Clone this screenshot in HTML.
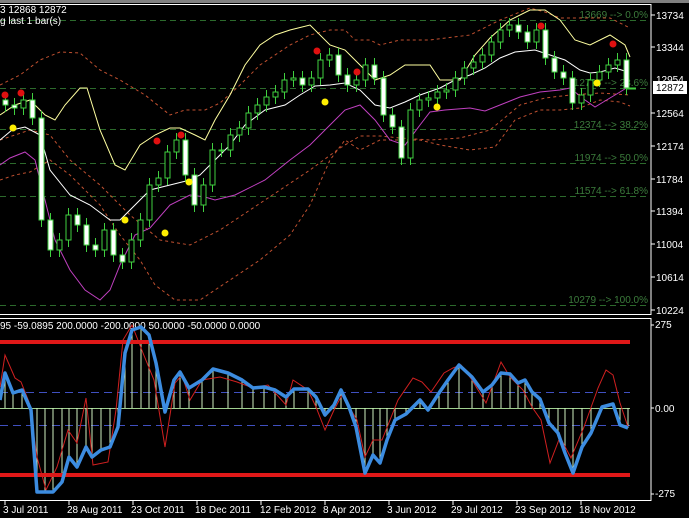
<!DOCTYPE html>
<html><head><meta charset="utf-8"><style>
html,body{margin:0;padding:0;background:#000;width:689px;height:518px;overflow:hidden}
svg{display:block}
text{font-family:"Liberation Sans",sans-serif;font-size:10px}
</style></head><body>
<svg width="689" height="518" viewBox="0 0 689 518" xmlns="http://www.w3.org/2000/svg">
<rect x="0" y="0" width="689" height="518" fill="#000"/>
<rect x="0" y="0" width="689" height="3" fill="#808080"/>
<!-- frames -->
<rect x="-1" y="4.5" width="652" height="310" fill="none" stroke="#fff" stroke-width="1"/>
<rect x="-1" y="318.5" width="652" height="182" fill="none" stroke="#fff" stroke-width="1"/>
<!-- fib lines -->
<g stroke="#2c6a2c" stroke-dasharray="6,4" stroke-width="1">
<line x1="0" y1="20.5" x2="650" y2="20.5"/>
<line x1="0" y1="88.5" x2="650" y2="88.5"/>
<line x1="0" y1="129.5" x2="650" y2="129.5"/>
<line x1="0" y1="163.5" x2="650" y2="163.5"/>
<line x1="0" y1="196.5" x2="650" y2="196.5"/>
<line x1="0" y1="305.5" x2="650" y2="305.5"/>
</g>
<g fill="#3c7c3c" text-anchor="end">
<text x="648" y="18">13669 --&gt; 0.0%</text>
<text x="648" y="86">12768 --&gt; 23.6%</text>
<text x="648" y="128">12374 --&gt; 38.2%</text>
<text x="648" y="161">11974 --&gt; 50.0%</text>
<text x="648" y="194">11574 --&gt; 61.8%</text>
<text x="648" y="303">10279 --&gt; 100.0%</text>
</g>
<!-- envelopes -->
<g fill="none" stroke-width="1">
<polyline stroke="#c05030" stroke-dasharray="3,3" points="0,85 20,75 40,60 60,52 80,53 100,70 120,80 145,95 170,115 185,110 205,110 220,103 240,85 260,65 290,45 310,35 330,30 345,30 355,40 370,40 380,45 400,40 430,40 470,35 500,20 530,8 545,12 560,18 580,18 610,18 630,28"/>
<polyline stroke="#c05030" stroke-dasharray="3,3" points="0,180 15,175 30,172 50,160 70,175 100,205 120,235 140,260 155,285 175,300 200,300 230,280 260,260 290,235 310,205 330,160 345,140 360,150 380,140 400,140 420,140 440,145 470,150 495,147 515,120 540,110 560,110 580,108 600,100 620,102 630,106"/>
<polyline stroke="#c05030" stroke-dasharray="3,3" points="0,140 30,130 50,135 70,160 100,185 130,215 160,240 190,245 220,230 250,210 280,190 310,170 340,148 360,136 380,136 400,138 430,140 460,138 490,130 520,105 545,98 570,95 600,93 630,95"/>
<polyline stroke="#ffffa0" points="0,115 15,105 30,100 45,115 55,120 65,105 80,88 87,88 100,130 115,165 125,170 140,145 155,135 170,128 180,128 195,135 205,140 215,120 230,95 245,65 260,45 275,35 290,30 310,25 330,45 345,50 360,65 375,80 390,75 405,65 430,65 440,80 460,80 475,55 490,38 510,20 530,10 545,10 560,20 575,40 590,45 610,35 625,45 630,57"/>
<polyline stroke="#ffffff" points="0,140 12,130 25,127 40,135 50,170 70,195 90,205 110,220 120,220 135,205 150,190 170,185 190,180 200,175 215,160 230,145 245,125 265,110 285,105 300,95 315,86 330,85 345,83 360,90 375,105 390,108 405,102 420,95 440,88 455,80 470,75 485,68 500,58 515,52 535,50 550,55 565,60 580,70 590,73 600,72 615,68 628,72"/>
<polyline stroke="#c040c0" points="0,165 10,158 25,152 35,160 45,200 55,240 70,270 85,290 100,300 110,290 120,265 135,235 150,228 170,205 190,195 205,197 215,200 235,195 265,180 290,160 310,145 330,125 345,110 360,105 375,120 390,140 405,145 420,125 430,112 445,110 470,108 485,111 500,105 520,97 540,92 560,90 570,88 575,92 585,100 595,107 605,101 620,92 628,87"/>
</g>
<!-- wicks -->
<path stroke="#40d040" stroke-width="1" fill="none" d="M5.5 93V112M14.5 98V115M23.5 93V115M32.5 93V125M41.5 111V227M50.5 213V257M59.5 233V257M68.5 208V247M77.5 208V232M86.5 218V252M95.5 238V257M104.5 223V257M113.5 223V262M122.5 248V269M131.5 233V269M140.5 213V247M149.5 178V227M158.5 171V192M167.5 145V185M176.5 133V159M185.5 133V182M194.5 168V212M203.5 178V212M212.5 143V192M221.5 143V157M230.5 128V157M239.5 121V142M248.5 106V135M257.5 98V120M266.5 90V112M275.5 85V104M284.5 73V99M293.5 71V87M302.5 71V92M311.5 71V92M320.5 53V85M329.5 48V67M338.5 48V82M347.5 68V92M356.5 73V92M365.5 58V87M374.5 58V85M383.5 71V122M392.5 108V134M401.5 120V165M410.5 103V165M419.5 93V117M428.5 91V107M437.5 85V105M446.5 83V99M455.5 71V97M464.5 61V85M473.5 55V75M482.5 48V69M491.5 35V62M500.5 23V49M509.5 18V37M518.5 18V39M527.5 25V49M536.5 23V49M545.5 23V65M554.5 51V79M563.5 65V85M572.5 71V110M581.5 88V110M590.5 73V102M599.5 65V87M608.5 58V79M617.5 53V72M626.5 53V95"/>
<!-- bodies -->
<g stroke="#40d040" stroke-width="1">
<g fill="#fff">
<rect x="3" y="100" width="5" height="5"/><rect x="12" y="105" width="5" height="3"/><rect x="30" y="100" width="5" height="18"/><rect x="39" y="118" width="5" height="102"/><rect x="48" y="220" width="5" height="30"/><rect x="75" y="215" width="5" height="10"/><rect x="84" y="225" width="5" height="20"/><rect x="93" y="245" width="5" height="5"/><rect x="111" y="230" width="5" height="25"/><rect x="120" y="255" width="5" height="7"/><rect x="183" y="140" width="5" height="35"/><rect x="192" y="175" width="5" height="30"/><rect x="300" y="78" width="5" height="7"/><rect x="336" y="55" width="5" height="20"/><rect x="345" y="75" width="5" height="10"/><rect x="372" y="65" width="5" height="13"/><rect x="381" y="78" width="5" height="37"/><rect x="390" y="115" width="5" height="12"/><rect x="399" y="127" width="5" height="31"/><rect x="516" y="25" width="5" height="7"/><rect x="525" y="32" width="5" height="10"/><rect x="543" y="30" width="5" height="28"/><rect x="552" y="58" width="5" height="14"/><rect x="561" y="72" width="5" height="6"/><rect x="570" y="78" width="5" height="25"/><rect x="624" y="60" width="5" height="28"/>
</g>
<g fill="#000">
<rect x="21" y="100" width="5" height="8"/><rect x="57" y="240" width="5" height="10"/><rect x="66" y="215" width="5" height="25"/><rect x="102" y="230" width="5" height="20"/><rect x="129" y="240" width="5" height="22"/><rect x="138" y="220" width="5" height="20"/><rect x="147" y="185" width="5" height="35"/><rect x="156" y="178" width="5" height="7"/><rect x="165" y="152" width="5" height="26"/><rect x="174" y="140" width="5" height="12"/><rect x="201" y="185" width="5" height="20"/><rect x="210" y="150" width="5" height="35"/><rect x="219" y="150" width="5" height="1"/><rect x="228" y="135" width="5" height="15"/><rect x="237" y="128" width="5" height="7"/><rect x="246" y="113" width="5" height="15"/><rect x="255" y="105" width="5" height="8"/><rect x="264" y="97" width="5" height="8"/><rect x="273" y="92" width="5" height="5"/><rect x="282" y="80" width="5" height="12"/><rect x="291" y="78" width="5" height="2"/><rect x="309" y="78" width="5" height="7"/><rect x="318" y="60" width="5" height="18"/><rect x="327" y="55" width="5" height="5"/><rect x="354" y="80" width="5" height="5"/><rect x="363" y="65" width="5" height="15"/><rect x="408" y="110" width="5" height="48"/><rect x="417" y="100" width="5" height="10"/><rect x="426" y="98" width="5" height="2"/><rect x="435" y="92" width="5" height="6"/><rect x="444" y="90" width="5" height="2"/><rect x="453" y="78" width="5" height="12"/><rect x="462" y="68" width="5" height="10"/><rect x="471" y="62" width="5" height="6"/><rect x="480" y="55" width="5" height="7"/><rect x="489" y="42" width="5" height="13"/><rect x="498" y="30" width="5" height="12"/><rect x="507" y="25" width="5" height="5"/><rect x="534" y="30" width="5" height="12"/><rect x="579" y="95" width="5" height="8"/><rect x="588" y="80" width="5" height="15"/><rect x="597" y="72" width="5" height="8"/><rect x="606" y="65" width="5" height="7"/><rect x="615" y="60" width="5" height="5"/>
</g>
</g>
<line x1="626" y1="88.5" x2="636" y2="88.5" stroke="#40d040" stroke-width="2"/>
<!-- dots -->
<g fill="#e01010">
<circle cx="5" cy="95" r="3.5"/><circle cx="21" cy="93" r="3.5"/><circle cx="157" cy="141" r="3.5"/><circle cx="181" cy="135" r="3.5"/><circle cx="317" cy="51" r="3.5"/><circle cx="357" cy="72" r="3.5"/><circle cx="541" cy="26" r="3.5"/><circle cx="613" cy="44" r="3.5"/>
</g>
<g fill="#ffee00">
<circle cx="13" cy="128" r="3.5"/><circle cx="125" cy="220" r="3.5"/><circle cx="165" cy="233" r="3.5"/><circle cx="189" cy="182" r="3.5"/><circle cx="325" cy="102" r="3.5"/><circle cx="437" cy="107" r="3.5"/><circle cx="597" cy="83" r="3.5"/>
</g>
<!-- price axis -->
<g fill="#fff">
<text x="656" y="19">13734</text><text x="656" y="51">13344</text><text x="656" y="83">12954</text><text x="656" y="117">12564</text><text x="656" y="150">12174</text><text x="656" y="183">11784</text><text x="656" y="215">11394</text><text x="656" y="248">11004</text><text x="656" y="281">10614</text><text x="656" y="314">10224</text>
</g>
<g stroke="#fff"><line x1="651" y1="15" x2="655" y2="15"/><line x1="651" y1="47" x2="655" y2="47"/><line x1="651" y1="113" x2="655" y2="113"/><line x1="651" y1="146" x2="655" y2="146"/><line x1="651" y1="179" x2="655" y2="179"/><line x1="651" y1="211" x2="655" y2="211"/><line x1="651" y1="244" x2="655" y2="244"/><line x1="651" y1="277" x2="655" y2="277"/><line x1="651" y1="310" x2="655" y2="310"/></g>
<rect x="653" y="81" width="34" height="13" fill="#fff"/>
<text x="656" y="91" fill="#000">12872</text>
<text x="0" y="13" fill="#fff">3 12868 12872</text>
<text x="0" y="24" fill="#fff">g last 1 bar(s)</text>
<!-- indicator -->
<text x="0" y="329" fill="#fff">95 -59.0895 200.0000 -200.0000 50.0000 -50.0000 0.0000</text>
<g stroke="#4050c0" stroke-dasharray="8,5" stroke-width="1"><line x1="0" y1="392.5" x2="630" y2="392.5"/><line x1="0" y1="425.5" x2="630" y2="425.5"/></g>
<g stroke="#d0f0c0" stroke-width="1">
<line x1="0" y1="408.5" x2="630" y2="408.5" stroke="#a0d090"/>
<path d="M5 408V373M13 408V393M22 408V390M31 408V410M37 408V492M45 408V492M53 408V492M62 408V482M69 408V457M77 408V467M86 408V447M92 408V457M101 408V450M110 408V447M118 408V427M125 408V353M132 408V330M141 408V327M149 408V335M156 408V363M174 408V380M180 408V372M189 408V388M202 408V380M213 408V369M228 408V373M242 408V380M253 408V388M264 408V387M275 408V390M286 408V397M294 408V389M308 408V389M316 408V397M325 408V415M334 408V405M341 408V390M349 408V407M356 408V427M365 408V473M373 408V455M380 408V463M387 408V440M395 408V420M406 408V414M420 408V400M428 408V410M439 408V393M448 408V380M459 408V365M472 408V377M483 408V392M492 408V385M501 408V373M510 408V374M518 408V383M525 408V380M532 408V392M540 408V399M549 408V423M558 408V433M565 408V453M573 408V473M582 408V447M591 408V433M602 408V407M613 408V404M620 408V425M628 408V428"/>
</g>
<g stroke="#e01818" stroke-width="4"><line x1="0" y1="342" x2="630" y2="342"/><line x1="0" y1="475" x2="630" y2="475"/></g>
<polyline fill="none" stroke="#d02020" stroke-width="1" points="0,387 5,355 15,378 21,382 29,402 37,457 46,490 57,467 68,430 77,443 86,398 93,465 108,462 116,410 123,340 132,325 143,353 154,380 165,447 175,383 182,375 190,400 202,380 220,377 237,382 253,388 268,385 286,405 293,380 308,390 316,407 325,430 334,410 342,395 351,410 357,420 365,457 373,440 382,440 398,400 413,378 422,382 431,392 444,373 453,368 461,365 472,380 486,403 501,362 510,377 523,390 532,407 541,420 550,463 560,437 571,458 584,427 598,388 606,370 613,375 620,403 628,427"/>
<polyline fill="none" stroke="#3c8ce0" stroke-width="3.5" stroke-linejoin="round" points="0,400 5,373 13,393 22,390 31,410 37,492 53,492 62,482 69,457 77,467 86,447 92,457 101,450 110,447 118,427 125,353 132,330 141,327 149,335 156,363 165,412 174,380 180,372 189,388 202,380 213,369 228,373 242,380 253,388 264,387 275,390 286,397 294,389 308,389 316,397 325,415 334,405 341,390 349,407 356,427 365,473 373,455 380,463 387,440 395,420 406,414 420,400 428,410 439,393 448,380 459,365 472,377 483,392 492,385 501,373 510,374 518,383 525,380 532,392 540,399 549,423 558,433 565,453 573,473 582,447 591,433 602,407 613,404 620,425 628,428"/>
<g fill="#fff"><text x="655" y="328">275</text><text x="655" y="412">0.00</text><text x="655" y="497">-275</text></g>
<g stroke="#fff"><line x1="651" y1="325" x2="654" y2="325"/><line x1="651" y1="408" x2="654" y2="408"/><line x1="651" y1="494" x2="654" y2="494"/></g>
<!-- dates -->
<g stroke="#fff"><path d="M5 501V505M69 501V505M133 501V505M197 501V505M261 501V505M325 501V505M389 501V505M453 501V505M517 501V505M581 501V505"/></g>
<g fill="#fff">
<text x="3" y="513">3 Jul 2011</text><text x="67" y="513">28 Aug 2011</text><text x="131" y="513">23 Oct 2011</text><text x="195" y="513">18 Dec 2011</text><text x="260" y="513">12 Feb 2012</text><text x="323" y="513">8 Apr 2012</text><text x="387" y="513">3 Jun 2012</text><text x="451" y="513">29 Jul 2012</text><text x="515" y="513">23 Sep 2012</text><text x="579" y="513">18 Nov 2012</text>
</g>
</svg>
</body></html>
